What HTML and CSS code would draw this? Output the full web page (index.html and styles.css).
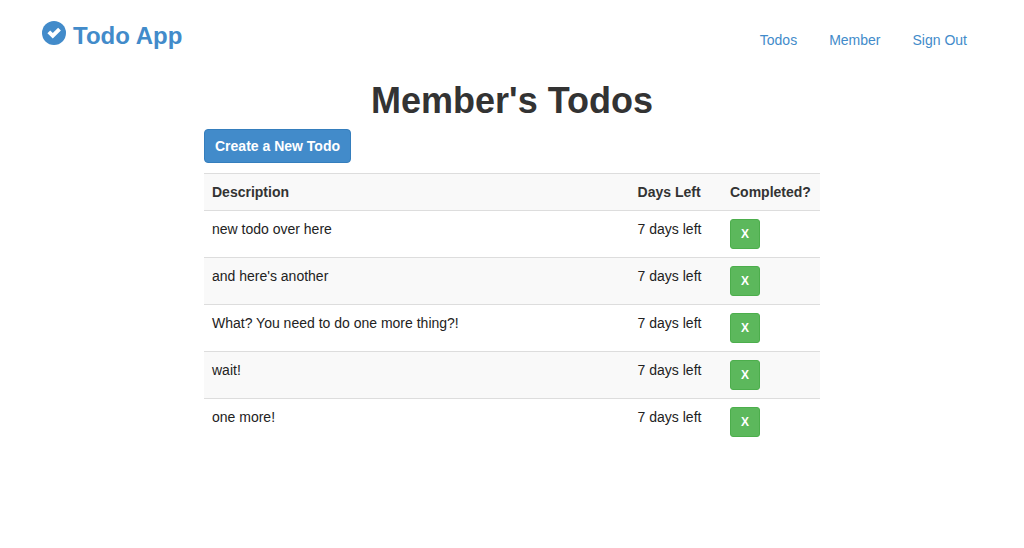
FILE: index.html
```html
<!DOCTYPE html>
<html lang="en">
<head>
<meta charset="utf-8">
<title>Todo App</title>
<link rel="stylesheet" href="styles.css">
</head>
<body>
<header class="navbar">
  <a class="brand" href="#">
    <svg class="brand-icon" viewBox="0 0 24 24" aria-hidden="true"><circle cx="12" cy="12" r="12" fill="#428bca"/><path d="M5.4 12.3L8.2 9.5L10.8 12.1L16.1 6.8L18.9 9.6L10.8 17.6Z" fill="#fff"/></svg>
    <span>Todo App</span>
  </a>
  <nav class="nav">
    <a href="#">Todos</a>
    <a href="#">Member</a>
    <a href="#">Sign Out</a>
  </nav>
</header>
<main class="content">
  <h1 class="title">Member's Todos</h1>
  <button class="btn btn-primary" type="button">Create a New Todo</button>
  <table class="todos">
    <thead>
      <tr><th class="col-description">Description</th><th class="col-days">Days Left</th><th class="col-done">Completed?</th></tr>
    </thead>
    <tbody>
      <tr><td>new todo over here</td><td>7 days left</td><td><button class="btn btn-success" type="button">X</button></td></tr>
      <tr><td>and here's another</td><td>7 days left</td><td><button class="btn btn-success" type="button">X</button></td></tr>
      <tr><td>What? You need to do one more thing?!</td><td>7 days left</td><td><button class="btn btn-success" type="button">X</button></td></tr>
      <tr><td>wait!</td><td>7 days left</td><td><button class="btn btn-success" type="button">X</button></td></tr>
      <tr><td>one more!</td><td>7 days left</td><td><button class="btn btn-success" type="button">X</button></td></tr>
    </tbody>
  </table>
</main>
</body>
</html>
```

FILE: styles.css
```css
* {
  box-sizing: border-box;
}

body {
  margin: 0;
  background: #fff;
  color: #333;
  font-family: "Liberation Sans", Arial, sans-serif;
  font-size: 14px;
  line-height: 20px;
}

a {
  color: #428bca;
  text-decoration: none;
}

.navbar {
  display: flex;
  justify-content: space-between;
  padding: 20px 42px 0;
}

.brand {
  display: flex;
  gap: 7px;
  font-size: 24px;
  font-weight: bold;
  line-height: 32px;
}

.brand-icon {
  width: 24px;
  height: 24px;
  margin-top: 1px;
}

.nav {
  display: flex;
  gap: 32px;
  padding: 10px 15px 0 0;
}

.content {
  max-width: 616px;
  margin: 0 auto;
  padding-top: 29px;
}

.title {
  margin: 0 0 8px;
  font-size: 36px;
  font-weight: bold;
  line-height: 40px;
  text-align: center;
}

.btn {
  display: block;
  border: 1px solid;
  border-radius: 4px;
  color: #fff;
  font-family: inherit;
  font-weight: bold;
  cursor: pointer;
}

.btn-primary {
  padding: 6px 10px;
  border-color: #357ebd;
  background: #428bca;
  font-size: 14px;
  line-height: 20px;
}

.btn-success {
  padding: 5px 10px;
  border-color: #4cae4c;
  border-radius: 3px;
  background: #5cb85c;
  font-size: 12px;
  line-height: 18px;
}

.todos {
  width: 100%;
  margin-top: 10px;
  border-collapse: collapse;
}

.todos th,
.todos td {
  padding: 8px;
  border-top: 1px solid #ddd;
  text-align: left;
  vertical-align: top;
}

.todos thead tr,
.todos tbody tr:nth-child(even) {
  background: #f9f9f9;
}

.todos td {
  color: #222;
}

.col-days {
  width: 15%;
}

.col-done {
  width: 98px;
}
```
